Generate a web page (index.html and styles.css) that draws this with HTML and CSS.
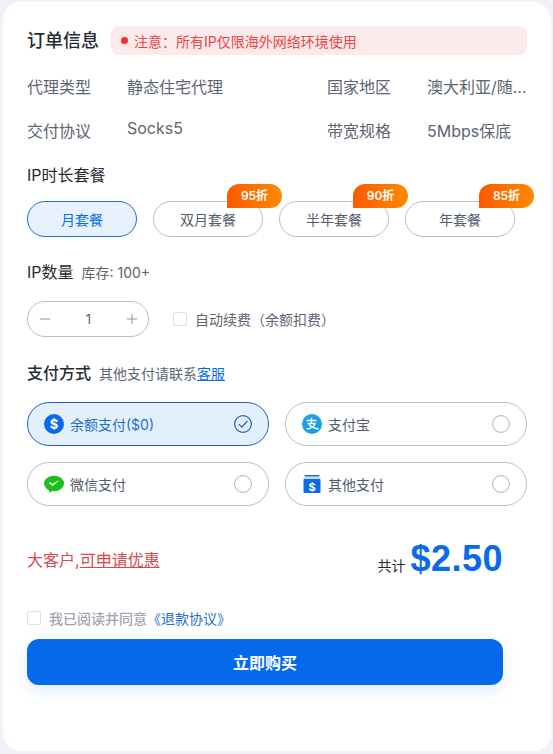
FILE: index.html
```html
<!DOCTYPE html>
<html lang="zh-CN">
<head>
<meta charset="utf-8">
<title>订单信息</title>
<link rel="stylesheet" href="styles.css">
</head>
<body>
<main class="card">
  <header class="head">
    <h2 class="title">订单信息</h2>
    <div class="notice"><i class="dot"></i>注意：所有IP仅限海外网络环境使用</div>
  </header>
  <dl class="info">
    <dt>代理类型</dt><dd>静态住宅代理</dd><dt>国家地区</dt><dd class="ell">澳大利亚/随机城市</dd>
    <dt>交付协议</dt><dd class="up">Socks5</dd><dt>带宽规格</dt><dd>5Mbps保底</dd>
  </dl>
  <h3 class="label first">IP时长套餐</h3>
  <div class="plans">
    <button class="plan on">月套餐</button>
    <button class="plan">双月套餐<span class="tag">95折</span></button>
    <button class="plan">半年套餐<span class="tag">90折</span></button>
    <button class="plan">年套餐<span class="tag">85折</span></button>
  </div>
  <div class="label-row qty-label"><h3 class="label">IP数量</h3><span class="sub">库存: 100+</span></div>
  <div class="qty-row">
    <div class="stepper">
      <svg class="step" viewBox="0 0 14 14"><path d="M1 7h12"/></svg>
      <span class="num">1</span>
      <svg class="step" viewBox="0 0 14 14"><path d="M1 7h12M7 1v12"/></svg>
    </div>
    <label class="check renew"><i class="box"></i>自动续费（余额扣费）</label>
  </div>
  <div class="label-row pay-label"><h3 class="label strong">支付方式</h3><span class="sub">其他支付请联系<a class="link">客服</a></span></div>
  <div class="pays">
    <div class="pay on">
      <svg class="ico" viewBox="0 0 20 20"><circle cx="10" cy="10" r="10" fill="#0a6be8"/><text x="10" y="14.500" text-anchor="middle" class="ico-t">$</text></svg>
      <span class="pay-name">余额支付($0)</span>
      <svg class="radio" viewBox="0 0 18 18"><circle cx="9" cy="9" r="8.400"/><path d="M4.800 9.200l3 3 5.600-6.200"/></svg>
    </div>
    <div class="pay">
      <svg class="ico" viewBox="0 0 20 20"><circle cx="10" cy="10" r="10" fill="#1a9fe3"/><path d="M4.500 6.500h10M9.500 3.800v5M5.500 9.500h7.500c-.8 2.800-3.500 5-8.500 5.500M7 10.500c2 2.500 5 3.700 9.500 4.500" fill="none" stroke="#fff" stroke-width="1.300"/></svg>
      <span class="pay-name">支付宝</span>
      <svg class="radio" viewBox="0 0 18 18"><circle cx="9" cy="9" r="8.400"/></svg>
    </div>
    <div class="pay">
      <svg class="ico" viewBox="0 0 20 20"><ellipse cx="10" cy="9.500" rx="10" ry="7.800" fill="#1dbf1d"/><path d="M5 15l.5 3.800 4-2.800z" fill="#1dbf1d"/><path d="M4.800 9l1.200-.8 2.400 1.600 7.200-3.800-6.800 6z" fill="#fff"/></svg>
      <span class="pay-name">微信支付</span>
      <svg class="radio" viewBox="0 0 18 18"><circle cx="9" cy="9" r="8.400"/></svg>
    </div>
    <div class="pay">
      <svg class="ico" viewBox="0 0 20 20"><rect x="2.500" y="1" width="15" height="1.500" rx=".7" fill="#0a6be8"/><rect x="1.500" y="3.500" width="17" height="1" fill="#7fb2f2"/><rect x="1.500" y="5" width="17" height="14" rx="1" fill="#0a6be8"/><text x="10" y="16.500" text-anchor="middle" class="ico-t small">$</text></svg>
      <span class="pay-name">其他支付</span>
      <svg class="radio" viewBox="0 0 18 18"><circle cx="9" cy="9" r="8.400"/></svg>
    </div>
  </div>
  <div class="total-row">
    <div class="vip">大客户,<a class="vip-link">可申请优惠</a></div>
    <div class="total"><span class="total-l">共计</span><strong class="price">$2.50</strong></div>
  </div>
  <label class="check agree"><i class="box"></i><span>我已阅读并同意</span><a class="agree-link">《退款协议》</a></label>
  <button class="buy">立即购买</button>
</main>
</body>
</html>
```
FILE: styles.css
```css
* { box-sizing: border-box; }
html, body { margin: 0; height: 100%; }
body {
  background: #f0f2f7;
  font-family: Inter, "Noto Sans CJK SC", sans-serif;
  color: #303540;
  overflow: hidden;
}
h2, h3, dl, dd, dt { margin: 0; }
.card {
  margin: 2px 2px 0 3px;
  height: 749px;
  background: #fff;
  border-radius: 18px;
  padding: 24px 24px 0;
}
.head { display: flex; align-items: center; gap: 12px; height: 29px; }
.title { font-size: 18px; line-height: 24px; font-weight: 500; color: #262b33; white-space: nowrap; }
.notice {
  flex: 1;
  height: 29px;
  background: #fce9e9;
  border-radius: 8px;
  padding-left: 10px;
  display: flex;
  align-items: center;
  font-size: 14px;
  color: #e5484d;
}
.dot { width: 7px; height: 7px; border-radius: 50%; background: #ee2f2f; margin-right: 6px; }
.info {
  display: grid;
  grid-template-columns: 100px 200px 100px 100px;
  grid-auto-rows: 44px;
  margin-top: 10px;
  font-size: 16px;
  line-height: 44px;
  color: #5d6573;
}
.info dt, .info dd { height: 44px; }
.ell { overflow: hidden; white-space: nowrap; text-overflow: ellipsis; }
.up { line-height: 39px; }
.label { margin: 0; font-size: 16px; line-height: 22px; font-weight: 400; color: #262b33; }
.label.first { margin-top: 11px; }
.label.strong { font-weight: 500; }
.plans { display: flex; gap: 16px; margin-top: 15px; }
.plan {
  position: relative;
  width: 110px;
  height: 36px;
  border: 1px solid #b8bfcc;
  border-radius: 18px;
  background: #fff;
  font: inherit;
  font-size: 14px;
  color: #555d6b;
  padding: 0;
}
.plan.on { background: #e8f2fe; border-color: #1f6fcf; color: #0a6be8; }
.tag {
  position: absolute;
  right: -20px;
  top: -18px;
  width: 55px;
  height: 24px;
  border-radius: 12px 12px 12px 0;
  background: linear-gradient(90deg, #fc5a00, #ff8a00);
  color: #fff;
  font-size: 12px;
  font-weight: 600;
  line-height: 24px;
  text-align: center;
}
.label-row { display: flex; align-items: center; gap: 8px; height: 22px; }
.qty-label { margin-top: 24px; }
.sub { font-size: 14px; color: #5d6573; }
.qty-row { display: flex; align-items: center; margin-top: 18px; gap: 24px; }
.stepper {
  width: 122px;
  height: 36px;
  border: 1px solid #b8bfcc;
  border-radius: 18px;
  display: flex;
  align-items: center;
  justify-content: space-between;
  padding: 0 10px 0 11px;
}
.step { width: 12px; height: 12px; fill: none; stroke: #7b8290; stroke-width: 1; }
.num { font-size: 13px; color: #555d6b; }
.check { display: flex; align-items: center; }
.box { width: 14px; height: 14px; border: 1px solid #dcdfe6; border-radius: 2px; background: #fff; }
.renew { font-size: 14px; color: #5d6573; gap: 8px; }
.pay-label { margin-top: 25px; }
.link { color: #0a6be8; text-decoration: underline; }
.pays { display: grid; grid-template-columns: 242px 242px; gap: 16px; margin-top: 18px; }
.pay {
  height: 44px;
  border: 1px solid #b8bfcc;
  border-radius: 22px;
  display: flex;
  align-items: center;
  padding: 0 16px;
  font-size: 14px;
  color: #555d6b;
}
.pay.on { background: #e4effc; border-color: #1f62b8; color: #1f6fcf; }
.ico { width: 20px; height: 20px; flex: none; margin-right: 6px; }
.ico-t { fill: #fff; font-size: 13px; font-weight: 700; font-family: Inter, sans-serif; }
.ico-t.small { font-size: 11px; }
.pay-name { flex: 1; }
.radio { width: 18px; height: 18px; fill: none; stroke: #a9b0bd; stroke-width: 1; }
.pay.on .radio { stroke: #1f62b8; stroke-width: 1.2; }
.total-row { display: flex; justify-content: space-between; align-items: center; width: 476px; margin-top: 31px; height: 44px; }
.vip { font-size: 16px; color: #d84a4a; }
.vip-link { text-decoration: underline; }
.total { display: flex; align-items: baseline; gap: 5px; }
.total-l { font-size: 14px; color: #262b33; }
.price { font-family: "Liberation Sans", Arial, sans-serif; font-size: 36px; line-height: 46px; letter-spacing: .5px; font-weight: 700; color: #0a6be8; }
.agree { margin-top: 27px; height: 20px; font-size: 14px; font-weight: 500; color: #a0a6b2; }
.agree .box { margin-right: 8px; }
.agree-link { color: #1f6fcf; font-weight: 400; }
.buy {
  display: block;
  width: 476px;
  height: 46px;
  margin-top: 11px;
  border: 0;
  border-radius: 12px;
  background: #0569ea;
  color: #fff;
  font: inherit;
  font-size: 16px;
  font-weight: 700;
  box-shadow: 0 6px 16px rgba(10, 107, 232, .13);
}
```
